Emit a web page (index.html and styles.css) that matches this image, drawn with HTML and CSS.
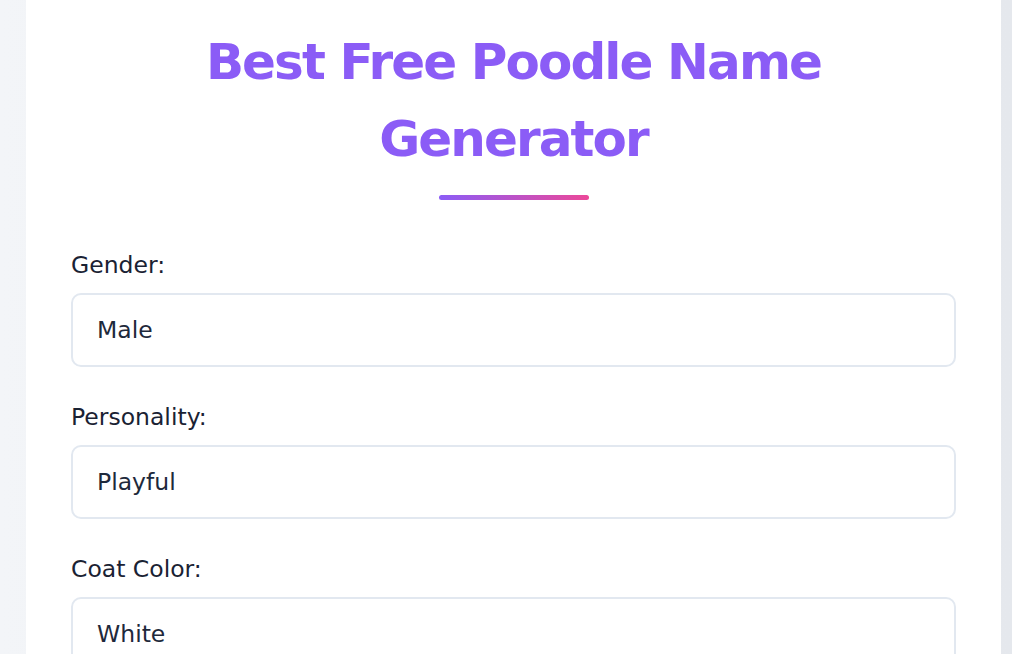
FILE: index.html
```html
<!DOCTYPE html>
<html lang="en">
<head>
<meta charset="utf-8">
<title>Best Free Poodle Name Generator</title>
<link rel="stylesheet" href="styles.css">
</head>
<body>
<main class="card">
  <h1 class="title">Best Free Poodle Name Generator</h1>
  <div class="bar"></div>
  <form class="form">
    <div class="field">
      <label class="label" for="gender">Gender:</label>
      <select class="input" id="gender"><option>Male</option><option>Female</option></select>
    </div>
    <div class="field">
      <label class="label" for="personality">Personality:</label>
      <select class="input" id="personality"><option>Playful</option><option>Calm</option></select>
    </div>
    <div class="field">
      <label class="label" for="coat">Coat Color:</label>
      <select class="input" id="coat"><option>White</option><option>Black</option></select>
    </div>
  </form>
</main>
</body>
</html>
```
FILE: styles.css
```css
html, body {
  margin: 0;
  padding: 0;
}
body {
  background: linear-gradient(90deg, #f3f5f8 0%, #e5e8ed 100%);
  font-family: "DejaVu Sans", "Liberation Sans", sans-serif;
  color: #1f2937;
  overflow: hidden;
  height: 654px;
}
.card {
  display: block;
  box-sizing: border-box;
  width: 975px;
  margin-left: 26px;
  min-height: 760px;
  background: #ffffff;
  padding: 24px 45px 40px;
}
.title {
  margin: 0;
  text-align: center;
  font-size: 50px;
  line-height: 77px;
  font-weight: 700;
  letter-spacing: -1.9px;
  color: #8b5cf6;
}
.bar {
  width: 150px;
  height: 5px;
  margin: 17px auto 0;
  border-radius: 3px;
  background: linear-gradient(90deg, #8b5cf6, #ec4899);
}
.form {
  margin-top: 50px;
  display: flex;
  flex-direction: column;
  gap: 35px;
}
.field {
  display: flex;
  flex-direction: column;
  gap: 13px;
}
.label {
  font-size: 23.5px;
  line-height: 30px;
  color: #1a2233;
}
.input {
  appearance: none;
  -webkit-appearance: none;
  box-sizing: border-box;
  width: 100%;
  height: 74px;
  border: 2px solid #e2e8f0;
  border-radius: 10px;
  background: #ffffff;
  padding: 0 24px;
  font-family: inherit;
  font-size: 23.5px;
  color: #1e293b;
  outline: none;
}
```
